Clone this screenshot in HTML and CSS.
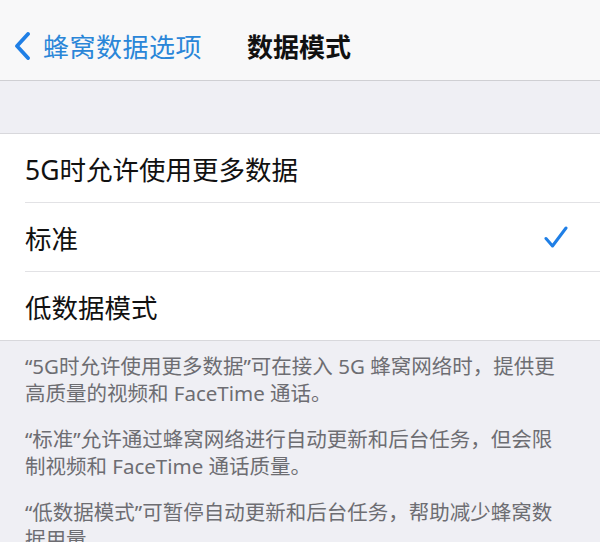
FILE: index.html
```html
<!DOCTYPE html>
<html lang="zh-CN">

<head>
    <meta charset="utf-8">
    <meta name="viewport" content="width=device-width, initial-scale=1">
    <title>数据模式</title>
    <link rel="stylesheet" href="styles.css">
</head>

<body>
    <div class="navbar">
        <div class="back">
            <svg class="chevron" width="18" height="28" viewBox="0 0 18 28">
                <path d="M15 2 L4 14 L15 26" fill="none" stroke="#1f7fe6" stroke-width="3.8" stroke-linecap="round" stroke-linejoin="round"/>
            </svg>
            <span class="backtxt">蜂窝数据选项</span>
        </div>
        <div class="title">数据模式</div>
    </div>

    <div class="spacer"></div>

    <div class="liste">
        <div class="zeile">
            <span>5G时允许使用更多数据</span>
        </div>
        <div class="zeile">
            <span>标准</span>
            <svg class="haken" width="24" height="24" viewBox="0 0 24 24">
                <path d="M2 13.5 L8.5 21 L22 3" fill="none" stroke="#1f7fe6" stroke-width="3" stroke-linecap="round" stroke-linejoin="round"/>
            </svg>
        </div>
        <div class="zeile">
            <span>低数据模式</span>
        </div>
    </div>

    <div class="fusstext">
        <p>“5G时允许使用更多数据”可在接入 5G 蜂窝网络时，提供更高质量的视频和 FaceTime 通话。</p>
        <p>“标准”允许通过蜂窝网络进行自动更新和后台任务，但会限制视频和 FaceTime 通话质量。</p>
        <p>“低数据模式”可暂停自动更新和后台任务，帮助减少蜂窝数据用量。</p>
    </div>
</body>

</html>
```

FILE: styles.css
```css
body {
    margin: 0;
    background-color: #efeff4;
    font-family: "Noto Sans", "Noto Sans CJK SC", sans-serif;
    overflow: hidden;
}

.navbar {
    height: 81px;
    background-color: #f8f8f9;
    border-bottom: 1px solid #cfcfd3;
    display: flex;
    align-items: center;
    padding-top: 12px;
    box-sizing: border-box;
}

.back {
    display: flex;
    align-items: center;
    padding-left: 13px;
}

.chevron {
    margin-right: 12px;
}

.backtxt {
    font-size: 26px;
    color: #2a86d8;
    letter-spacing: 0.5px;
}

.title {
    font-size: 26px;
    font-weight: bold;
    color: #111;
    margin-left: 45px;
}

.spacer {
    height: 52px;
}

.liste {
    background-color: #fff;
    border-top: 1px solid #d8d8dc;
    border-bottom: 1px solid #d8d8dc;
}

.zeile {
    height: 68px;
    margin-left: 25px;
    padding-right: 32px;
    display: flex;
    align-items: center;
    justify-content: space-between;
    font-size: 26.5px;
    color: #111;
    border-bottom: 1px solid #e2e2e5;
}

.zeile:last-child {
    border-bottom: none;
}

.fusstext {
    padding: 12px 40px 0 25px;
    font-size: 20.5px;
    line-height: 27px;
    color: #6d6d72;
}

.fusstext p {
    margin: 0 0 19px 0;
}
```
